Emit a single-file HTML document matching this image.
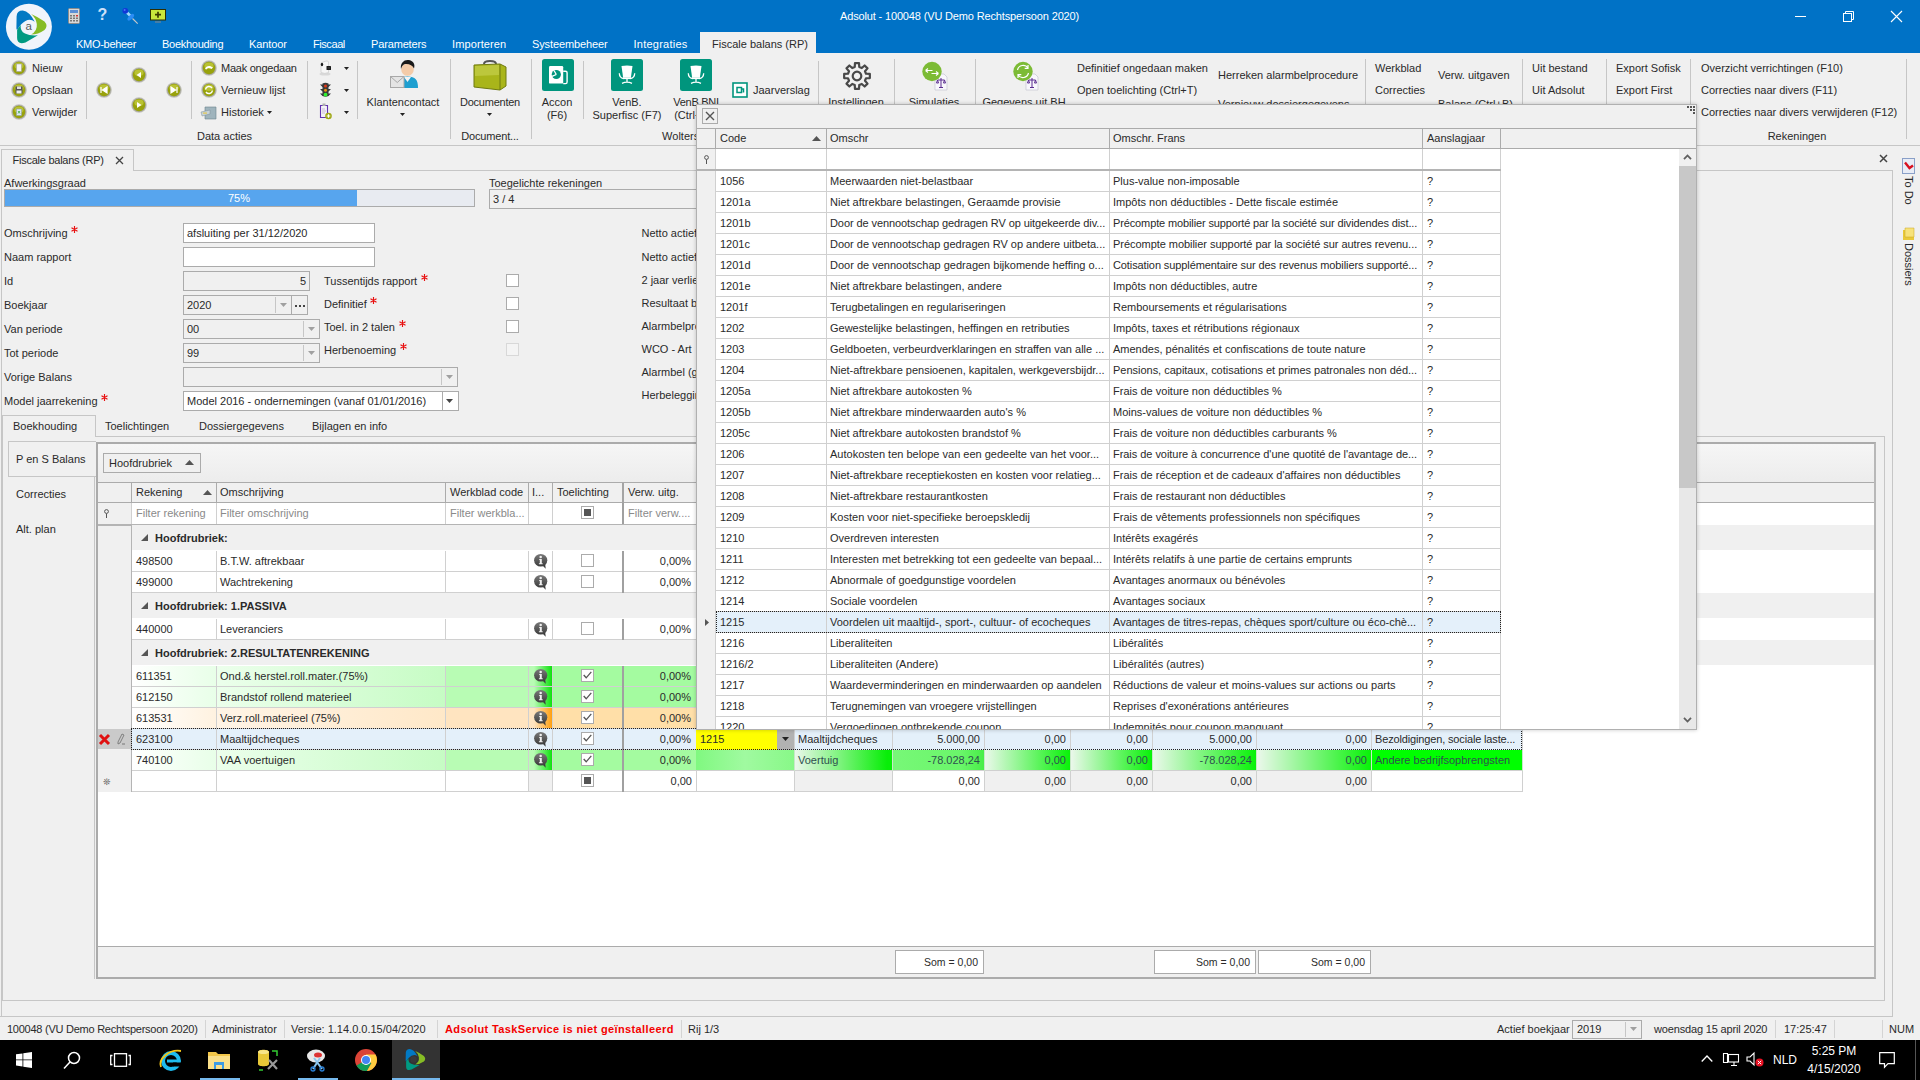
<!DOCTYPE html>
<html lang="nl"><head><meta charset="utf-8"><title>Adsolut - 100048 (VU Demo Rechtspersoon 2020)</title>
<style>
html,body{margin:0;padding:0;}
body{width:1920px;height:1080px;position:relative;overflow:hidden;background:#f0f0f0;font-family:"Liberation Sans",sans-serif;font-size:11px;color:#2a2a2a;}
div{position:absolute;box-sizing:border-box;}
.t{white-space:nowrap;line-height:14px;height:14px;}
.c{width:300px;text-align:center;}
.w{color:#fff;}
.b{font-weight:bold;}
.g{color:#8a8a8a;}
svg{position:absolute;overflow:visible;}
</style></head>
<body>
<div style="left:0px;top:0px;width:1920px;height:53px;background:#0072c6;"></div>
<svg style="left:0px;top:0px" width="56" height="54" viewBox="0 0 56 54"><circle cx="28.9" cy="26.850" r="23" fill="#f0f4fb"/><path d="M16.400 28.500L16.600 16.500Q16.800 10.600 22.800 10.600Q29.500 11.500 34.700 21.800Q28.500 16.800 21 24.500Q18.500 27.500 17 30Z" fill="#0279c3"/><path d="M31.100 14Q37 16.500 44.500 21.500Q48.500 25.900 44.500 30Q38 34.500 31.100 34.500Q37.500 31 36.800 24Q36 18 31.100 14Z" fill="#86bc25"/><path d="M20.700 24.900Q20 31 25 33.500Q30 36 37.900 35.300L25.500 42.500Q17.100 45 17.100 38L17.100 30Q18.500 27.500 20.700 24.900Z" fill="#009a82"/><text x="28.800" y="30.300" font-size="11.500" text-anchor="middle" fill="#5a5a5a" font-family="Liberation Sans">a</text></svg>
<svg style="left:68px;top:8px" width="12" height="16" viewBox="0 0 12 16"><rect x="0.5" y="0.5" width="11" height="15" rx="1" fill="#d8d8d8" stroke="#8c8c8c"/><rect x="2" y="2" width="8" height="3" fill="#5b8fd6"/><g fill="#777"><rect x="2" y="7" width="2" height="1.5"/><rect x="5" y="7" width="2" height="1.5"/><rect x="8" y="7" width="2" height="1.5" fill="#d33"/><rect x="2" y="9.5" width="2" height="1.5"/><rect x="5" y="9.5" width="2" height="1.5"/><rect x="8" y="9.5" width="2" height="1.5"/><rect x="2" y="12" width="2" height="1.5"/><rect x="5" y="12" width="2" height="1.5"/><rect x="8" y="12" width="2" height="1.5"/></g></svg>
<div class="t" style="left:97.5px;top:9px;font-size:16px;color:#cfe0f8;font-weight:bold;line-height:16px;top:7px;">?</div>
<svg style="left:120px;top:6px" width="20" height="20" viewBox="120 6 20 20"><path d="M132.500 18.500L137.700 23.700" stroke="#c8c8c8" stroke-width="1.100"/><path d="M126.500 12L131 16.500" stroke="#9fd8ff" stroke-width="2.600"/><ellipse cx="130.800" cy="17.200" rx="4.200" ry="2" transform="rotate(-45 130.800 17.200)" fill="#2a8cf5"/><circle cx="125.300" cy="10.800" r="2.900" fill="#1038d8"/><circle cx="124.600" cy="10" r="1" fill="#4a78f0"/></svg>
<svg style="left:150px;top:9px" width="17" height="15" viewBox="0 0 17 15"><rect x="0.5" y="0.5" width="15" height="10.5" fill="#c8e63c" stroke="#2e2e00"/><path d="M5 5.700h6M8 2.800v6" stroke="#3a3a00" stroke-width="1.700"/><rect x="5" y="12.5" width="6" height="1" fill="#888"/></svg>
<div class="t" style="left:840px;top:9px;color:#fff;letter-spacing:-0.15px;">Adsolut - 100048 (VU Demo Rechtspersoon 2020)</div>
<div style="left:1795px;top:16px;width:11px;height:1px;background:#fff;"></div>
<svg style="left:1843px;top:11px" width="11" height="11" viewBox="0 0 11 11" fill="none" stroke="#fff" stroke-width="1"><rect x="0.5" y="2.5" width="8" height="8"/><path d="M2.5 2.5V0.5H10.5V8.5H8.5"/></svg>
<svg style="left:1891px;top:11px" width="11" height="11" viewBox="0 0 11 11" stroke="#fff" stroke-width="1.1"><path d="M0 0L11 11M11 0L0 11"/></svg>
<div class="t" style="left:76px;top:37px;color:#fff;letter-spacing:-0.29px;">KMO-beheer</div>
<div class="t" style="left:162px;top:37px;color:#fff;letter-spacing:-0.27px;">Boekhouding</div>
<div class="t" style="left:249px;top:37px;color:#fff;letter-spacing:-0.1px;">Kantoor</div>
<div class="t" style="left:313px;top:37px;color:#fff;letter-spacing:-0.43px;">Fiscaal</div>
<div class="t" style="left:371px;top:37px;color:#fff;letter-spacing:-0.15px;">Parameters</div>
<div class="t" style="left:452px;top:37px;color:#fff;letter-spacing:0.11px;">Importeren</div>
<div class="t" style="left:532px;top:37px;color:#fff;letter-spacing:-0.12px;">Systeembeheer</div>
<div class="t" style="left:633.5px;top:37px;color:#fff;letter-spacing:0.24px;">Integraties</div>
<div style="left:700px;top:32px;width:116px;height:22px;background:#f0f0f0;"></div>
<div class="t" style="left:712px;top:37px;">Fiscale balans (RP)</div>
<div style="left:0px;top:53px;width:1920px;height:92px;background:#f0f0f0;"></div>
<div style="left:0px;top:145px;width:1920px;height:1px;background:#c6c6c6;"></div>
<svg style="left:11px;top:60px" width="16" height="16" viewBox="-.5 -.5 16 16"><circle cx="7.500" cy="7.500" r="7.800" fill="#c2c2ba"/><circle cx="7.500" cy="7.500" r="7" fill="#a8a89c"/><circle cx="7.500" cy="7.500" r="6.200" fill="#98a20c"/><ellipse cx="7.500" cy="5.300" rx="4.600" ry="3.200" fill="#c4cc40" opacity=".75"/><rect x="5" y="3.5" width="5" height="7.5" fill="#f4f4f4" stroke="#999" stroke-width=".5"/></svg>
<div class="t" style="left:32px;top:61px;">Nieuw</div>
<svg style="left:11px;top:82px" width="16" height="16" viewBox="-.5 -.5 16 16"><circle cx="7.500" cy="7.500" r="7.800" fill="#c2c2ba"/><circle cx="7.500" cy="7.500" r="7" fill="#a8a89c"/><circle cx="7.500" cy="7.500" r="6.200" fill="#98a20c"/><ellipse cx="7.500" cy="5.300" rx="4.600" ry="3.200" fill="#c4cc40" opacity=".75"/><rect x="4" y="4" width="7" height="7" fill="#555"/><rect x="5.5" y="4" width="4" height="2.5" fill="#ddd"/><rect x="5" y="8" width="5" height="3" fill="#eee"/></svg>
<div class="t" style="left:32px;top:83px;">Opslaan</div>
<svg style="left:11px;top:104px" width="16" height="16" viewBox="-.5 -.5 16 16"><circle cx="7.500" cy="7.500" r="7.800" fill="#c2c2ba"/><circle cx="7.500" cy="7.500" r="7" fill="#a8a89c"/><circle cx="7.500" cy="7.500" r="6.200" fill="#98a20c"/><ellipse cx="7.500" cy="5.300" rx="4.600" ry="3.200" fill="#c4cc40" opacity=".75"/><rect x="5" y="4.5" width="5" height="6.5" fill="#dfe9f5" stroke="#89a" stroke-width=".5"/><path d="M6.5 6.5l2 2.5m0-2.5l-2 2.5" stroke="#3a3" stroke-width=".8"/></svg>
<div class="t" style="left:32px;top:105px;">Verwijder</div>
<div style="left:86px;top:61px;width:1px;height:58px;background:#c6c6c6;"></div>
<svg style="left:96px;top:82px" width="16" height="16" viewBox="-.5 -.5 16 16"><circle cx="7.500" cy="7.500" r="7.800" fill="#c2c2ba"/><circle cx="7.500" cy="7.500" r="7" fill="#a8a89c"/><circle cx="7.500" cy="7.500" r="6.200" fill="#98a20c"/><ellipse cx="7.500" cy="5.300" rx="4.600" ry="3.200" fill="#c4cc40" opacity=".75"/><path d="M4.5 4.5v6M10.5 4.5L6 7.5l4.5 3z" fill="#fff" stroke="#fff" stroke-width="1.2"/></svg>
<svg style="left:131px;top:67px" width="16" height="16" viewBox="-.5 -.5 16 16"><circle cx="7.500" cy="7.500" r="7.800" fill="#c2c2ba"/><circle cx="7.500" cy="7.500" r="7" fill="#a8a89c"/><circle cx="7.500" cy="7.500" r="6.200" fill="#98a20c"/><ellipse cx="7.500" cy="5.300" rx="4.600" ry="3.200" fill="#c4cc40" opacity=".75"/><path d="M9.5 4.5L5 7.5l4.5 3z" fill="#fff"/></svg>
<svg style="left:131px;top:97px" width="16" height="16" viewBox="-.5 -.5 16 16"><circle cx="7.500" cy="7.500" r="7.800" fill="#c2c2ba"/><circle cx="7.500" cy="7.500" r="7" fill="#a8a89c"/><circle cx="7.500" cy="7.500" r="6.200" fill="#98a20c"/><ellipse cx="7.500" cy="5.300" rx="4.600" ry="3.200" fill="#c4cc40" opacity=".75"/><path d="M5.5 4.5L10 7.5l-4.5 3z" fill="#fff"/></svg>
<svg style="left:166px;top:82px" width="16" height="16" viewBox="-.5 -.5 16 16"><circle cx="7.500" cy="7.500" r="7.800" fill="#c2c2ba"/><circle cx="7.500" cy="7.500" r="7" fill="#a8a89c"/><circle cx="7.500" cy="7.500" r="6.200" fill="#98a20c"/><ellipse cx="7.500" cy="5.300" rx="4.600" ry="3.200" fill="#c4cc40" opacity=".75"/><path d="M10.5 4.5v6M4.5 4.5L9 7.5l-4.5 3z" fill="#fff" stroke="#fff" stroke-width="1.2"/></svg>
<div style="left:191px;top:61px;width:1px;height:58px;background:#c6c6c6;"></div>
<svg style="left:201px;top:60px" width="16" height="16" viewBox="-.5 -.5 16 16"><circle cx="7.500" cy="7.500" r="7.800" fill="#c2c2ba"/><circle cx="7.500" cy="7.500" r="7" fill="#a8a89c"/><circle cx="7.500" cy="7.500" r="6.200" fill="#98a20c"/><ellipse cx="7.500" cy="5.300" rx="4.600" ry="3.200" fill="#c4cc40" opacity=".75"/><path d="M3.5 8.5c1-3.5 5-4 8-1.5l-1.5 1.5c-2-1.5-4-1.5-5 .5z" fill="#fff"/></svg>
<div class="t" style="left:221px;top:61px;letter-spacing:-0.25px;">Maak ongedaan</div>
<svg style="left:201px;top:82px" width="16" height="16" viewBox="-.5 -.5 16 16"><circle cx="7.500" cy="7.500" r="7.800" fill="#c2c2ba"/><circle cx="7.500" cy="7.500" r="7" fill="#a8a89c"/><circle cx="7.500" cy="7.500" r="6.200" fill="#98a20c"/><ellipse cx="7.500" cy="5.300" rx="4.600" ry="3.200" fill="#c4cc40" opacity=".75"/><path d="M4 7a3.6 3.6 0 0 1 6.5-1.5M11 8a3.6 3.6 0 0 1-6.5 1.5" fill="none" stroke="#fff" stroke-width="1.5"/></svg>
<div class="t" style="left:221px;top:83px;">Vernieuw lijst</div>
<svg style="left:201px;top:105px" width="17" height="15" viewBox="0 0 17 15"><path d="M4 2h11v12H4z" fill="#9fb4bd" stroke="#6d848e" stroke-width=".6"/><path d="M0 7l9-2v4l-8 2z" fill="#c7d3d8" stroke="#7c8f97" stroke-width=".5"/><rect x="2" y="7.5" width="4" height="1.2" fill="#e6c84f"/></svg>
<div class="t" style="left:221px;top:105px;">Historiek</div>
<svg style="left:267px;top:111px" width="5" height="3" viewBox="0 0 5 3"><path d="M0 0h5L2.5 3z" fill="#222"/></svg>
<div style="left:307px;top:61px;width:1px;height:58px;background:#c6c6c6;"></div>
<svg style="left:319px;top:60px" width="14" height="16" viewBox="0 0 14 16"><ellipse cx="6" cy="14" rx="5.500" ry="1.500" fill="#d8d8d8"/><path d="M2 3.500q0-1 1-1l4-1.500q2-.5 2.500 1v10.500q-3.500 1.800-7.500 0z" fill="#f6f6f6" stroke="#c4c4c4" stroke-width=".6"/><ellipse cx="3" cy="4.500" rx="1.200" ry="1.800" fill="#1a1a1a"/><rect x="7.500" y="6" width="4.500" height="4" rx=".5" fill="#1c1c1c"/><rect x="8.700" y="7" width="2.300" height="1.800" fill="#333"/></svg>
<svg style="left:320px;top:82px" width="11" height="16" viewBox="0 0 11 16"><path d="M2.500 1.500q3-1.500 6 0v12.500q-3 1.500-6 0z" fill="#3a3a3a"/><path d="M0 2.500h11l-2.500 2.500h-6zM0 7h11l-2.500 2.500h-6zM0 11.500h11l-2.500 2.500h-6z" fill="#3a3a3a"/><circle cx="5.500" cy="4" r="1.500" fill="#e03818"/><circle cx="5.500" cy="8.300" r="1.500" fill="#e89010"/><circle cx="5.500" cy="12.700" r="1.900" fill="#30f030"/></svg>
<svg style="left:319px;top:103px" width="14" height="17" viewBox="0 0 14 17"><path d="M1.500 2.500h7v12h-7z" fill="#f4f2f8" stroke="#6232b0" stroke-width="1.100"/><rect x="3.500" y=".5" width="3" height="2.500" fill="#b0b0b0"/><path d="M3 6h3M3 8h4M3 10h3" stroke="#b8a8c8" stroke-width=".7"/><circle cx="9.500" cy="13" r="3.300" fill="#a0a818"/><path d="M7.700 13h3.600M9.500 11.200v3.600" stroke="#fff" stroke-width="1.200"/></svg>
<svg style="left:344px;top:67px" width="5" height="3" viewBox="0 0 5 3"><path d="M0 0h5L2.5 3z" fill="#222"/></svg>
<svg style="left:344px;top:89px" width="5" height="3" viewBox="0 0 5 3"><path d="M0 0h5L2.5 3z" fill="#222"/></svg>
<svg style="left:344px;top:111px" width="5" height="3" viewBox="0 0 5 3"><path d="M0 0h5L2.5 3z" fill="#222"/></svg>
<div style="left:357px;top:61px;width:1px;height:58px;background:#c6c6c6;"></div>
<svg style="left:388px;top:58px" width="32" height="32" viewBox="388 58 32 32"><path d="M396.500 88c0-8 3-11.500 11-11.500s10.500 3.500 10.500 11.500z" fill="#1e9fd0"/><path d="M404 77l3.500 5 3.500-5z" fill="#f4f4f4"/><circle cx="407.500" cy="69.500" r="6.300" fill="#f4cba8"/><path d="M401 69c-1-6 3-9.500 7.500-9s7 4 5.500 8.500c-1.500-3-4-4.500-7.500-4.500s-4.500 2-5.500 5z" fill="#1a1a1a"/><rect x="390.500" y="76.500" width="13.500" height="11" fill="#e4e4e4" stroke="#a8a8a8"/><path d="M390.500 76.500l6.750 6 6.750-6" fill="none" stroke="#a8a8a8"/></svg>
<div class="t c" style="left:253px;top:95px;">Klantencontact</div>
<svg style="left:400px;top:113px" width="5" height="3" viewBox="0 0 5 3"><path d="M0 0h5L2.5 3z" fill="#222"/></svg>
<div style="left:450px;top:59px;width:1px;height:80px;background:#c6c6c6;"></div>
<svg style="left:472px;top:58px" width="36" height="34" viewBox="0 0 36 34"><path d="M12 6c0-4 12-4 12 0" fill="none" stroke="#555" stroke-width="2"/><path d="M2 7l26-1 6 3v19l-6 4-26-3z" fill="#a9b51a" stroke="#6f7a10"/><path d="M28 6v26" stroke="#6f7a10"/><path d="M3 8l24-1v10l-24 1z" fill="#c5cf4c" opacity=".7"/></svg>
<div class="t c" style="left:340px;top:95px;letter-spacing:-0.24px;">Documenten</div>
<svg style="left:487px;top:113px" width="5" height="3" viewBox="0 0 5 3"><path d="M0 0h5L2.5 3z" fill="#222"/></svg>
<div class="t" style="left:42px;top:129px;left:197px;">Data acties</div>
<div class="t c" style="left:340px;top:129px;letter-spacing:-0.17px;">Document...</div>
<div style="left:531px;top:59px;width:1px;height:80px;background:#c6c6c6;"></div>
<svg style="left:542px;top:59px" width="32" height="32" viewBox="0 0 32 32"><rect width="32" height="32" rx="2.500" fill="#00957d"/><rect x="7" y="7" width="14.200" height="17.600" rx="1.200" fill="#fff"/><path d="M21.200 12.200h2.300q1.600 0 1.600 1.600v9.200q0 1.600-1.600 1.600h-2.300" fill="none" stroke="#fff" stroke-width="1.400"/><circle cx="14.300" cy="15.500" r="4.600" fill="#00957d"/><path d="M14.300 15.500l-2.300-4M14.300 15.500l-4.300 1.800" stroke="#fff" stroke-width="1.300"/></svg>
<div class="t c" style="left:407px;top:95px;">Accon</div>
<div class="t c" style="left:407px;top:108px;">(F6)</div>
<div style="left:583px;top:61px;width:1px;height:58px;background:#c6c6c6;"></div>
<svg style="left:611px;top:59px" width="32" height="32" viewBox="0 0 32 32"><rect width="32" height="32" rx="2.500" fill="#00957d"/><path d="M10.500 7q5.500-1.200 11 0l-1.600 11.500h-7.800z" fill="#fff"/><path d="M8.300 14.300q.2 4.700 4.200 5.200M23.700 14.300q-.2 4.700-4.200 5.200M16 20v3.300M11 24.300q5-2.200 10 0" fill="none" stroke="#fff" stroke-width="1.300"/><rect x="12" y="18.300" width="8" height="1.800" fill="#fff"/></svg>
<div class="t c" style="left:477px;top:95px;">VenB.</div>
<div class="t c" style="left:477px;top:108px;">Superfisc (F7)</div>
<svg style="left:680px;top:59px" width="32" height="32" viewBox="0 0 32 32"><rect width="32" height="32" rx="2.500" fill="#00957d"/><path d="M10.500 7q5.500-1.200 11 0l-1.600 11.500h-7.800z" fill="#fff"/><path d="M8.300 14.300q.2 4.700 4.200 5.200M23.700 14.300q-.2 4.700-4.200 5.200M16 20v3.300M11 24.300q5-2.200 10 0" fill="none" stroke="#fff" stroke-width="1.300"/><rect x="12" y="18.300" width="8" height="1.800" fill="#fff"/></svg>
<div class="t c" style="left:546px;top:95px;letter-spacing:-0.3px;">VenB BNI</div>
<div class="t c" style="left:546px;top:108px;">(Ctrl+F7)</div>
<svg style="left:732px;top:82px" width="16" height="16" viewBox="0 0 16 16"><rect x="1" y="1" width="14" height="14" fill="#fff" stroke="#00957d" stroke-width="1.6"/><path d="M5 5.500h4.500v5H5zM9.500 7h2v3.500" fill="none" stroke="#00957d" stroke-width="1.500"/></svg>
<div class="t" style="left:753px;top:83px;">Jaarverslag</div>
<div class="t c" style="left:549px;top:129px;">Wolters Kluwer</div>
<div style="left:818px;top:61px;width:1px;height:58px;background:#c6c6c6;"></div>
<svg style="left:841.500px;top:60.500px" width="30" height="30" viewBox="-15 -15 30 30"><g fill="none" stroke="#484848" stroke-width="2.200" stroke-linejoin="round"><circle r="4.300"/><path d="M-2.25 -9.02L-2.03 -12.84L2.03 -12.84L2.25 -9.02L4.79 -7.97L7.64 -10.52L10.52 -7.64L7.97 -4.79L9.02 -2.25L12.84 -2.03L12.84 2.03L9.02 2.25L7.97 4.79L10.52 7.64L7.64 10.52L4.79 7.97L2.25 9.02L2.03 12.84L-2.03 12.84L-2.25 9.02L-4.79 7.97L-7.64 10.52L-10.52 7.64L-7.97 4.79L-9.02 2.25L-12.84 2.03L-12.84 -2.03L-9.02 -2.25L-7.97 -4.79L-10.52 -7.64L-7.64 -10.52L-4.79 -7.97Z"/></g></svg>
<div class="t c" style="left:706px;top:95px;">Instellingen</div>
<div style="left:894px;top:59px;width:1px;height:60px;background:#c6c6c6;"></div>
<svg style="left:922px;top:61px" width="28" height="30" viewBox="0 0 28 30"><path d="M13 13h9l3 3v13H13z" fill="#f8f7fc" stroke="#c4c4d0" stroke-width=".7"/><path d="M19 17v9M15.5 19h7M15.5 19l-1 3h2zM22.500 19l-1 3h2zM17 26.500h4" stroke="#5b2d90" stroke-width="1" fill="none"/><circle cx="10" cy="10.500" r="9.700" fill="#7cbb35"/><path d="M3.500 9.500h7m-7 0l2.500-2m-2.500 2l2.500 2M9.500 12.500h7m0 0l-2.500-2m2.500 2l-2.500 2" stroke="#fff" stroke-width="1.1" fill="none"/></svg>
<div class="t c" style="left:784px;top:95px;">Simulaties</div>
<div style="left:975px;top:59px;width:1px;height:60px;background:#c6c6c6;"></div>
<svg style="left:1013px;top:61px" width="28" height="30" viewBox="0 0 28 30"><path d="M13 13h9l3 3v13H13z" fill="#f8f7fc" stroke="#c4c4d0" stroke-width=".7"/><path d="M19 17v9M15.5 19h7M15.5 19l-1 3h2zM22.500 19l-1 3h2zM17 26.500h4" stroke="#5b2d90" stroke-width="1" fill="none"/><circle cx="10" cy="10.500" r="9.700" fill="#7cbb35"/><path d="M4.500 9a5.800 5.800 0 0 1 10.500-2M15.500 12a5.800 5.800 0 0 1-10.500 2M15 4v3.300h-3.300M5 17v-3.300h3.300" stroke="#fff" stroke-width="1.2" fill="none"/></svg>
<div class="t c" style="left:874px;top:95px;">Gegevens uit BH</div>
<div class="t" style="left:1077px;top:61px;">Definitief ongedaan maken</div>
<div class="t" style="left:1077px;top:83px;">Open toelichting (Ctrl+T)</div>
<div class="t" style="left:1218px;top:68px;">Herreken alarmbelprocedure</div>
<div class="t" style="left:1218px;top:97px;">Vernieuw dossiergegevens</div>
<div style="left:1365px;top:59px;width:1px;height:80px;background:#c6c6c6;"></div>
<div class="t" style="left:1375px;top:61px;">Werkblad</div>
<div class="t" style="left:1375px;top:83px;">Correcties</div>
<div class="t" style="left:1438px;top:68px;">Verw. uitgaven</div>
<div class="t" style="left:1438px;top:97px;">Balans (Ctrl+B)</div>
<div style="left:1522px;top:59px;width:1px;height:80px;background:#c6c6c6;"></div>
<div class="t" style="left:1532px;top:61px;">Uit bestand</div>
<div class="t" style="left:1532px;top:83px;">Uit Adsolut</div>
<div style="left:1606px;top:59px;width:1px;height:80px;background:#c6c6c6;"></div>
<div class="t" style="left:1616px;top:61px;">Export Sofisk</div>
<div class="t" style="left:1616px;top:83px;">Export First</div>
<div style="left:1690px;top:59px;width:1px;height:80px;background:#c6c6c6;"></div>
<div class="t" style="left:1701px;top:61px;">Overzicht verrichtingen (F10)</div>
<div class="t" style="left:1701px;top:83px;">Correcties naar divers (F11)</div>
<div class="t" style="left:1701px;top:105px;">Correcties naar divers verwijderen (F12)</div>
<div class="t c" style="left:1647px;top:129px;">Rekeningen</div>
<div style="left:1906px;top:59px;width:1px;height:80px;background:#c6c6c6;"></div>
<div style="left:1px;top:170px;width:1892px;height:1px;background:#c6c6c6;"></div>
<div style="left:1px;top:149px;width:133px;height:22px;background:#f0f0f0;border:1px solid #c6c6c6;border-bottom:none;"></div>
<div style="left:1px;top:170px;width:1px;height:847px;background:#c6c6c6;"></div>
<div class="t" style="left:12.5px;top:153px;letter-spacing:-0.25px;">Fiscale balans (RP)</div>
<svg style="left:116px;top:157px" width="7" height="7" viewBox="0 0 7 7" stroke="#444" stroke-width="1.3"><path d="M0 0L7 7M7 0L0 7"/></svg>
<svg style="left:1880px;top:155px" width="7" height="7" viewBox="0 0 7 7" stroke="#444" stroke-width="1.5"><path d="M0 0L7 7M7 0L0 7"/></svg>
<div style="left:1892px;top:170px;width:1px;height:847px;background:#c6c6c6;"></div>
<svg style="left:1902px;top:158px" width="13" height="16" viewBox="0 0 13 16"><rect x=".5" y=".5" width="12" height="15" fill="#e8ecf6" stroke="#8aa0c8"/><path d="M3 4.500l4.500 5.500 3.500-2.500" fill="none" stroke="#d81020" stroke-width="2.400"/></svg>
<div class="t" style="left:1902px;top:176px;writing-mode:vertical-rl;height:auto;width:14px;line-height:14px;">To Do</div>
<svg style="left:1902px;top:227px" width="13" height="14" viewBox="0 0 13 14"><path d="M1 3h11v10H1z" fill="#e9c93a"/><path d="M3 1h9v9H3z" fill="#f7e27a" stroke="#c9a520" stroke-width=".5"/></svg>
<div class="t" style="left:1902px;top:243px;writing-mode:vertical-rl;height:auto;width:14px;line-height:14px;">Dossiers</div>
<div class="t" style="left:4px;top:176px;">Afwerkingsgraad</div>
<div style="left:4px;top:189px;width:471px;height:18px;background:#e8ebf1;border:1px solid #ababab;"></div>
<div style="left:5px;top:190px;width:352px;height:16px;background:#57a5ee;"></div>
<div class="t c" style="left:89px;top:191px;color:#fff;">75%</div>
<div class="t" style="left:489px;top:176px;">Toegelichte rekeningen</div>
<div style="left:489px;top:189px;width:400px;height:20px;background:#f0f0f0;border:1px solid #ababab;"></div>
<div class="t" style="left:493px;top:192px;">3 / 4</div>
<div class="t" style="left:4px;top:226px;">Omschrijving</div>
<svg style="left:71.1px;top:226px" width="7" height="7" viewBox="-3.500 -3.500 7 7" stroke="#e81010" stroke-width="1.150"><path d="M0-3.400V3.400M-3-1.700L3 1.700M-3 1.700L3-1.700"/></svg>
<div class="t" style="left:4px;top:250px;">Naam rapport</div>
<div class="t" style="left:4px;top:274px;">Id</div>
<div class="t" style="left:4px;top:298px;">Boekjaar</div>
<div class="t" style="left:4px;top:322px;">Van periode</div>
<div class="t" style="left:4px;top:346px;">Tot periode</div>
<div class="t" style="left:4px;top:370px;">Vorige Balans</div>
<div class="t" style="left:4px;top:394px;">Model jaarrekening</div>
<svg style="left:101.1px;top:394px" width="7" height="7" viewBox="-3.500 -3.500 7 7" stroke="#e81010" stroke-width="1.150"><path d="M0-3.400V3.400M-3-1.700L3 1.700M-3 1.700L3-1.700"/></svg>
<div style="left:183px;top:223px;width:192px;height:20px;background:#fff;border:1px solid #ababab;"></div>
<div class="t" style="left:187px;top:226px;">afsluiting per 31/12/2020</div>
<div style="left:183px;top:247px;width:192px;height:20px;background:#fff;border:1px solid #ababab;"></div>
<div style="left:183px;top:271px;width:127px;height:20px;background:#f0f0f0;border:1px solid #ababab;"></div>
<div class="t" style="right:1614px;top:274px;">5</div>
<div style="left:183px;top:295px;width:109px;height:20px;background:#f0f0f0;border:1px solid #ababab;"></div>
<div class="t" style="left:187px;top:298px;">2020</div>
<div style="left:275px;top:297px;width:1px;height:16px;background:#c6c6c6;"></div>
<svg style="left:280px;top:303px" width="7" height="4" viewBox="0 0 7 4"><path d="M0 0h7L3.500 4z" fill="#a0a0a0"/></svg>
<div style="left:291px;top:295px;width:17px;height:20px;background:#f0f0f0;border:1px solid #ababab;"></div>
<div style="left:295px;top:305px;width:2px;height:2px;background:#444;"></div>
<div style="left:299px;top:305px;width:2px;height:2px;background:#444;"></div>
<div style="left:303px;top:305px;width:2px;height:2px;background:#444;"></div>
<div style="left:183px;top:319px;width:137px;height:20px;background:#f0f0f0;border:1px solid #ababab;"></div>
<div class="t" style="left:187px;top:322px;">00</div>
<div style="left:303px;top:321px;width:1px;height:16px;background:#c6c6c6;"></div>
<svg style="left:308px;top:327px" width="7" height="4" viewBox="0 0 7 4"><path d="M0 0h7L3.500 4z" fill="#a0a0a0"/></svg>
<div style="left:183px;top:343px;width:137px;height:20px;background:#f0f0f0;border:1px solid #ababab;"></div>
<div class="t" style="left:187px;top:346px;">99</div>
<div style="left:303px;top:345px;width:1px;height:16px;background:#c6c6c6;"></div>
<svg style="left:308px;top:351px" width="7" height="4" viewBox="0 0 7 4"><path d="M0 0h7L3.500 4z" fill="#a0a0a0"/></svg>
<div style="left:183px;top:367px;width:275px;height:20px;background:#f0f0f0;border:1px solid #ababab;"></div>
<div style="left:441px;top:369px;width:1px;height:16px;background:#c6c6c6;"></div>
<svg style="left:446px;top:375px" width="7" height="4" viewBox="0 0 7 4"><path d="M0 0h7L3.500 4z" fill="#a0a0a0"/></svg>
<div style="left:183px;top:391px;width:276px;height:20px;background:#fff;border:1px solid #ababab;"></div>
<div class="t" style="left:187px;top:394px;">Model 2016 - ondernemingen (vanaf 01/01/2016)</div>
<div style="left:442px;top:392px;width:1px;height:18px;background:#ababab;"></div>
<svg style="left:446px;top:399px" width="7" height="4" viewBox="0 0 7 4"><path d="M0 0h7L3.500 4z" fill="#444"/></svg>
<div class="t" style="left:324px;top:274px;">Tussentijds rapport</div>
<svg style="left:420.7px;top:274px" width="7" height="7" viewBox="-3.500 -3.500 7 7" stroke="#e81010" stroke-width="1.150"><path d="M0-3.400V3.400M-3-1.700L3 1.700M-3 1.700L3-1.700"/></svg>
<div style="left:506px;top:274px;width:13px;height:13px;background:#fff;border:1px solid #ababab;"></div>
<div class="t" style="left:324px;top:297px;">Definitief</div>
<svg style="left:370.3px;top:297px" width="7" height="7" viewBox="-3.500 -3.500 7 7" stroke="#e81010" stroke-width="1.150"><path d="M0-3.400V3.400M-3-1.700L3 1.700M-3 1.700L3-1.700"/></svg>
<div style="left:506px;top:297px;width:13px;height:13px;background:#fff;border:1px solid #ababab;"></div>
<div class="t" style="left:324px;top:320px;">Toel. in 2 talen</div>
<svg style="left:398.5px;top:320px" width="7" height="7" viewBox="-3.500 -3.500 7 7" stroke="#e81010" stroke-width="1.150"><path d="M0-3.400V3.400M-3-1.700L3 1.700M-3 1.700L3-1.700"/></svg>
<div style="left:506px;top:320px;width:13px;height:13px;background:#fff;border:1px solid #ababab;"></div>
<div class="t" style="left:324px;top:343px;">Herbenoeming</div>
<svg style="left:399.7px;top:343px" width="7" height="7" viewBox="-3.500 -3.500 7 7" stroke="#e81010" stroke-width="1.150"><path d="M0-3.400V3.400M-3-1.700L3 1.700M-3 1.700L3-1.700"/></svg>
<div style="left:506px;top:343px;width:13px;height:13px;background:#f4f4f4;border:1px solid #d8d8d8;"></div>
<div class="t" style="left:641.5px;top:226px;">Netto actief</div>
<div class="t" style="left:641.5px;top:250px;">Netto actief</div>
<div class="t" style="left:641.5px;top:273px;">2 jaar verlies</div>
<div class="t" style="left:641.5px;top:296px;">Resultaat bo</div>
<div class="t" style="left:641.5px;top:319px;">Alarmbelproc</div>
<div class="t" style="left:641.5px;top:342px;">WCO - Art</div>
<div class="t" style="left:641.5px;top:365px;">Alarmbel (g</div>
<div class="t" style="left:641.5px;top:388px;">Herbeleggin</div>
<div style="left:2px;top:436px;width:1883px;height:1px;background:#c6c6c6;"></div>
<div style="left:2px;top:436px;width:1px;height:565px;background:#c6c6c6;"></div>
<div style="left:1884px;top:436px;width:1px;height:565px;background:#c6c6c6;"></div>
<div style="left:2px;top:1000px;width:1883px;height:1px;background:#c6c6c6;"></div>
<div style="left:0px;top:1016px;width:1893px;height:1px;background:#c6c6c6;"></div>
<div style="left:2px;top:415px;width:94px;height:22px;background:#f0f0f0;border:1px solid #c6c6c6;border-bottom:none;"></div>
<div class="t" style="left:13px;top:419px;">Boekhouding</div>
<div class="t" style="left:105px;top:419px;">Toelichtingen</div>
<div class="t" style="left:199px;top:419px;">Dossiergegevens</div>
<div class="t" style="left:312px;top:419px;">Bijlagen en info</div>
<div style="left:94px;top:441px;width:1px;height:538px;background:#c6c6c6;"></div>
<div style="left:8px;top:441px;width:88px;height:36px;background:#f0f0f0;border:1px solid #c6c6c6;border-right:none;"></div>
<div class="t" style="left:16px;top:452px;">P en S Balans</div>
<div class="t" style="left:16px;top:487px;">Correcties</div>
<div class="t" style="left:16px;top:522px;">Alt. plan</div>
<div style="left:96px;top:442px;width:1780px;height:537px;background:#fff;border:2px solid #ababab;border-right:2px solid #b8b8b8;"></div>
<div style="left:98px;top:444px;width:1776px;height:39px;background:linear-gradient(#f6f6f6,#ececec);"></div>
<div style="left:103px;top:453px;width:98px;height:20px;background:#f0f0f0;border:1px solid #ababab;"></div>
<div class="t" style="left:109px;top:456px;">Hoofdrubriek</div>
<svg style="left:185px;top:460px" width="9" height="5" viewBox="0 0 9 5"><path d="M0 5h9L4.500 0z" fill="#555"/></svg>
<div style="left:98px;top:483px;width:1776px;height:20px;background:#f0f0f0;"></div>
<div style="left:98px;top:482px;width:1776px;height:1px;background:#ababab;"></div>
<div style="left:98px;top:502px;width:1776px;height:1px;background:#ababab;"></div>
<div style="left:131px;top:483px;width:1px;height:19px;background:#ababab;"></div>
<div style="left:216px;top:483px;width:1px;height:19px;background:#ababab;"></div>
<div style="left:445px;top:483px;width:1px;height:19px;background:#ababab;"></div>
<div style="left:528px;top:483px;width:1px;height:19px;background:#ababab;"></div>
<div style="left:552px;top:483px;width:1px;height:19px;background:#ababab;"></div>
<div style="left:622px;top:483px;width:1px;height:19px;background:#ababab;"></div>
<div style="left:696px;top:483px;width:1px;height:19px;background:#ababab;"></div>
<div class="t" style="left:136px;top:485px;">Rekening</div>
<svg style="left:203px;top:490px" width="9" height="5" viewBox="0 0 9 5"><path d="M0 5h9L4.500 0z" fill="#555"/></svg>
<div class="t" style="left:220px;top:485px;">Omschrijving</div>
<div class="t" style="left:450px;top:485px;">Werkblad code</div>
<div class="t" style="left:532px;top:485px;">I...</div>
<div class="t" style="left:557px;top:485px;">Toelichting</div>
<div class="t" style="left:628px;top:485px;">Verw. uitg.</div>
<div style="left:98px;top:503px;width:33px;height:21px;background:#f0f0f0;"></div>
<div style="left:98px;top:524px;width:598px;height:2px;background:#b4b4b4;"></div>
<div style="left:131px;top:503px;width:1px;height:21px;background:#d0d0d0;"></div>
<div style="left:216px;top:503px;width:1px;height:21px;background:#d0d0d0;"></div>
<div style="left:445px;top:503px;width:1px;height:21px;background:#d0d0d0;"></div>
<div style="left:528px;top:503px;width:1px;height:21px;background:#d0d0d0;"></div>
<div style="left:552px;top:503px;width:1px;height:21px;background:#d0d0d0;"></div>
<div style="left:622px;top:503px;width:1px;height:21px;background:#d0d0d0;"></div>
<div style="left:696px;top:503px;width:1px;height:21px;background:#d0d0d0;"></div>
<div style="left:622px;top:503px;width:2px;height:21px;background:#a0a0a0;"></div>
<div style="left:622px;top:483px;width:2px;height:20px;background:#a4a4a4;"></div>
<svg style="left:104px;top:509px" width="5" height="9" viewBox="0 0 5 9"><circle cx="2.500" cy="2.500" r="1.900" fill="none" stroke="#555" stroke-width="1"/><path d="M2.500 4.500v4.500" stroke="#555"/></svg>
<div class="t g" style="left:136px;top:506px;">Filter rekening</div>
<div class="t g" style="left:220px;top:506px;">Filter omschrijving</div>
<div class="t g" style="left:450px;top:506px;">Filter werkbla...</div>
<div class="t g" style="left:628px;top:506px;">Filter verw....</div>
<div style="left:581px;top:506px;width:13px;height:13px;background:#fff;border:1px solid #ababab;"></div>
<div style="left:584px;top:509px;width:7px;height:7px;background:#555;"></div>
<div style="left:98px;top:526px;width:33px;height:266px;background:#f0f0f0;"></div>
<div style="left:131px;top:525px;width:1743px;height:25px;background:#f0f0f0;"></div>
<svg style="left:141px;top:534px" width="7" height="7" viewBox="0 0 7 7"><path d="M0 7h7V0z" fill="#555"/></svg>
<div class="t b" style="left:155px;top:531px;">Hoofdrubriek:</div>
<div style="left:131px;top:571px;width:565px;height:1px;background:#d0d0d0;"></div>
<div style="left:216px;top:551px;width:1px;height:21px;background:#d0d0d0;"></div>
<div style="left:445px;top:551px;width:1px;height:21px;background:#d0d0d0;"></div>
<div style="left:528px;top:551px;width:1px;height:21px;background:#d0d0d0;"></div>
<div style="left:552px;top:551px;width:1px;height:21px;background:#d0d0d0;"></div>
<div style="left:622px;top:551px;width:2px;height:21px;background:#a0a0a0;"></div>
<div class="t" style="left:136px;top:554px;">498500</div>
<div class="t" style="left:220px;top:554px;">B.T.W. aftrekbaar</div>
<svg style="left:533px;top:553px" width="16" height="17" viewBox="0 0 16 17"><defs><linearGradient id="ig553" x1="0" y1="0" x2="0" y2="1"><stop offset="0" stop-color="#7a7a7a"/><stop offset="1" stop-color="#3c3c3c"/></linearGradient></defs><path d="M9.500 12.500l3.200 3.200-.5-4.500z" fill="#3c3c3c"/><ellipse cx="7.700" cy="7.200" rx="6.600" ry="6.300" fill="url(#ig553)"/><circle cx="7.700" cy="3.900" r="1.250" fill="#f0f0f0"/><path d="M6.200 6h2.600v4.300h.9v1H5.900v-1h.9V7h-.6z" fill="#f0f0f0"/></svg>
<div style="left:581px;top:554px;width:13px;height:13px;background:#fff;border:1px solid #ababab;"></div>
<div class="t" style="right:1229px;top:554px;">0,00%</div>
<div style="left:131px;top:592px;width:565px;height:1px;background:#d0d0d0;"></div>
<div style="left:216px;top:572px;width:1px;height:21px;background:#d0d0d0;"></div>
<div style="left:445px;top:572px;width:1px;height:21px;background:#d0d0d0;"></div>
<div style="left:528px;top:572px;width:1px;height:21px;background:#d0d0d0;"></div>
<div style="left:552px;top:572px;width:1px;height:21px;background:#d0d0d0;"></div>
<div style="left:622px;top:572px;width:2px;height:21px;background:#a0a0a0;"></div>
<div class="t" style="left:136px;top:575px;">499000</div>
<div class="t" style="left:220px;top:575px;">Wachtrekening</div>
<svg style="left:533px;top:574px" width="16" height="17" viewBox="0 0 16 17"><defs><linearGradient id="ig574" x1="0" y1="0" x2="0" y2="1"><stop offset="0" stop-color="#7a7a7a"/><stop offset="1" stop-color="#3c3c3c"/></linearGradient></defs><path d="M9.500 12.500l3.200 3.200-.5-4.500z" fill="#3c3c3c"/><ellipse cx="7.700" cy="7.200" rx="6.600" ry="6.300" fill="url(#ig574)"/><circle cx="7.700" cy="3.900" r="1.250" fill="#f0f0f0"/><path d="M6.200 6h2.600v4.300h.9v1H5.900v-1h.9V7h-.6z" fill="#f0f0f0"/></svg>
<div style="left:581px;top:575px;width:13px;height:13px;background:#fff;border:1px solid #ababab;"></div>
<div class="t" style="right:1229px;top:575px;">0,00%</div>
<div style="left:131px;top:593px;width:1743px;height:25px;background:#f0f0f0;"></div>
<svg style="left:141px;top:602px" width="7" height="7" viewBox="0 0 7 7"><path d="M0 7h7V0z" fill="#555"/></svg>
<div class="t b" style="left:155px;top:599px;">Hoofdrubriek: 1.PASSIVA</div>
<div style="left:131px;top:639px;width:565px;height:1px;background:#d0d0d0;"></div>
<div style="left:216px;top:619px;width:1px;height:21px;background:#d0d0d0;"></div>
<div style="left:445px;top:619px;width:1px;height:21px;background:#d0d0d0;"></div>
<div style="left:528px;top:619px;width:1px;height:21px;background:#d0d0d0;"></div>
<div style="left:552px;top:619px;width:1px;height:21px;background:#d0d0d0;"></div>
<div style="left:622px;top:619px;width:2px;height:21px;background:#a0a0a0;"></div>
<div class="t" style="left:136px;top:622px;">440000</div>
<div class="t" style="left:220px;top:622px;">Leveranciers</div>
<svg style="left:533px;top:621px" width="16" height="17" viewBox="0 0 16 17"><defs><linearGradient id="ig621" x1="0" y1="0" x2="0" y2="1"><stop offset="0" stop-color="#7a7a7a"/><stop offset="1" stop-color="#3c3c3c"/></linearGradient></defs><path d="M9.500 12.500l3.200 3.200-.5-4.500z" fill="#3c3c3c"/><ellipse cx="7.700" cy="7.200" rx="6.600" ry="6.300" fill="url(#ig621)"/><circle cx="7.700" cy="3.900" r="1.250" fill="#f0f0f0"/><path d="M6.200 6h2.600v4.300h.9v1H5.900v-1h.9V7h-.6z" fill="#f0f0f0"/></svg>
<div style="left:581px;top:622px;width:13px;height:13px;background:#fff;border:1px solid #ababab;"></div>
<div class="t" style="right:1229px;top:622px;">0,00%</div>
<div style="left:131px;top:640px;width:1743px;height:25px;background:#f0f0f0;"></div>
<svg style="left:141px;top:649px" width="7" height="7" viewBox="0 0 7 7"><path d="M0 7h7V0z" fill="#555"/></svg>
<div class="t b" style="left:155px;top:646px;">Hoofdrubriek: 2.RESULTATENREKENING</div>
<div style="left:132px;top:666px;width:84px;height:21px;background:linear-gradient(90deg,#ffffff,#e8ffe8);"></div>
<div style="left:216px;top:666px;width:229px;height:21px;background:linear-gradient(90deg,#ecffec,#c6fcc4);"></div>
<div style="left:445px;top:666px;width:83px;height:21px;background:#b8fcb4;"></div>
<div style="left:528px;top:666px;width:24px;height:21px;background:linear-gradient(90deg,#b8fcb4 25%,#10e010 100%);"></div>
<div style="left:552px;top:666px;width:70px;height:21px;background:#a4fba0;"></div>
<div style="left:622px;top:666px;width:74px;height:21px;background:#a4fba0;"></div>
<div style="left:131px;top:686px;width:565px;height:1px;background:#d0d0d0;"></div>
<div style="left:216px;top:666px;width:1px;height:21px;background:#d0d0d0;"></div>
<div style="left:445px;top:666px;width:1px;height:21px;background:#d0d0d0;"></div>
<div style="left:528px;top:666px;width:1px;height:21px;background:#d0d0d0;"></div>
<div style="left:552px;top:666px;width:1px;height:21px;background:#d0d0d0;"></div>
<div style="left:622px;top:666px;width:2px;height:21px;background:#a0a0a0;"></div>
<div class="t" style="left:136px;top:669px;">611351</div>
<div class="t" style="left:220px;top:669px;">Ond.&amp; herstel.roll.mater.(75%)</div>
<svg style="left:533px;top:668px" width="16" height="17" viewBox="0 0 16 17"><defs><linearGradient id="ig668" x1="0" y1="0" x2="0" y2="1"><stop offset="0" stop-color="#7a7a7a"/><stop offset="1" stop-color="#3c3c3c"/></linearGradient></defs><path d="M9.500 12.500l3.200 3.200-.5-4.500z" fill="#3c3c3c"/><ellipse cx="7.700" cy="7.200" rx="6.600" ry="6.300" fill="url(#ig668)"/><circle cx="7.700" cy="3.900" r="1.250" fill="#f0f0f0"/><path d="M6.200 6h2.600v4.300h.9v1H5.900v-1h.9V7h-.6z" fill="#f0f0f0"/></svg>
<div style="left:581px;top:669px;width:13px;height:13px;background:#fff;border:1px solid #ababab;"></div>
<svg style="left:583px;top:671px" width="9" height="8" viewBox="0 0 9 8"><path d="M.7 4L3.200 6.800 8.300.8" fill="none" stroke="#555" stroke-width="1.300"/></svg>
<div class="t" style="right:1229px;top:669px;">0,00%</div>
<div style="left:132px;top:687px;width:84px;height:21px;background:linear-gradient(90deg,#ffffff,#e8ffe8);"></div>
<div style="left:216px;top:687px;width:229px;height:21px;background:linear-gradient(90deg,#ecffec,#c6fcc4);"></div>
<div style="left:445px;top:687px;width:83px;height:21px;background:#b8fcb4;"></div>
<div style="left:528px;top:687px;width:24px;height:21px;background:linear-gradient(90deg,#b8fcb4 25%,#10e010 100%);"></div>
<div style="left:552px;top:687px;width:70px;height:21px;background:#a4fba0;"></div>
<div style="left:622px;top:687px;width:74px;height:21px;background:#a4fba0;"></div>
<div style="left:131px;top:707px;width:565px;height:1px;background:#d0d0d0;"></div>
<div style="left:216px;top:687px;width:1px;height:21px;background:#d0d0d0;"></div>
<div style="left:445px;top:687px;width:1px;height:21px;background:#d0d0d0;"></div>
<div style="left:528px;top:687px;width:1px;height:21px;background:#d0d0d0;"></div>
<div style="left:552px;top:687px;width:1px;height:21px;background:#d0d0d0;"></div>
<div style="left:622px;top:687px;width:2px;height:21px;background:#a0a0a0;"></div>
<div class="t" style="left:136px;top:690px;">612150</div>
<div class="t" style="left:220px;top:690px;">Brandstof rollend materieel</div>
<svg style="left:533px;top:689px" width="16" height="17" viewBox="0 0 16 17"><defs><linearGradient id="ig689" x1="0" y1="0" x2="0" y2="1"><stop offset="0" stop-color="#7a7a7a"/><stop offset="1" stop-color="#3c3c3c"/></linearGradient></defs><path d="M9.500 12.500l3.200 3.200-.5-4.500z" fill="#3c3c3c"/><ellipse cx="7.700" cy="7.200" rx="6.600" ry="6.300" fill="url(#ig689)"/><circle cx="7.700" cy="3.900" r="1.250" fill="#f0f0f0"/><path d="M6.200 6h2.600v4.300h.9v1H5.900v-1h.9V7h-.6z" fill="#f0f0f0"/></svg>
<div style="left:581px;top:690px;width:13px;height:13px;background:#fff;border:1px solid #ababab;"></div>
<svg style="left:583px;top:692px" width="9" height="8" viewBox="0 0 9 8"><path d="M.7 4L3.200 6.800 8.300.8" fill="none" stroke="#555" stroke-width="1.300"/></svg>
<div class="t" style="right:1229px;top:690px;">0,00%</div>
<div style="left:132px;top:708px;width:84px;height:21px;background:linear-gradient(90deg,#ffffff,#fff2e0);"></div>
<div style="left:216px;top:708px;width:229px;height:21px;background:linear-gradient(90deg,#fff4e6,#ffe8c8);"></div>
<div style="left:445px;top:708px;width:83px;height:21px;background:#ffe4c0;"></div>
<div style="left:528px;top:708px;width:24px;height:21px;background:linear-gradient(90deg,#ffe4c0 25%,#ffa010 100%);"></div>
<div style="left:552px;top:708px;width:70px;height:21px;background:#ffdfa8;"></div>
<div style="left:622px;top:708px;width:74px;height:21px;background:#ffdfa8;"></div>
<div style="left:131px;top:728px;width:565px;height:1px;background:#d0d0d0;"></div>
<div style="left:216px;top:708px;width:1px;height:21px;background:#d0d0d0;"></div>
<div style="left:445px;top:708px;width:1px;height:21px;background:#d0d0d0;"></div>
<div style="left:528px;top:708px;width:1px;height:21px;background:#d0d0d0;"></div>
<div style="left:552px;top:708px;width:1px;height:21px;background:#d0d0d0;"></div>
<div style="left:622px;top:708px;width:2px;height:21px;background:#a0a0a0;"></div>
<div class="t" style="left:136px;top:711px;">613531</div>
<div class="t" style="left:220px;top:711px;">Verz.roll.materieel (75%)</div>
<svg style="left:533px;top:710px" width="16" height="17" viewBox="0 0 16 17"><defs><linearGradient id="ig710" x1="0" y1="0" x2="0" y2="1"><stop offset="0" stop-color="#7a7a7a"/><stop offset="1" stop-color="#3c3c3c"/></linearGradient></defs><path d="M9.500 12.500l3.200 3.200-.5-4.500z" fill="#3c3c3c"/><ellipse cx="7.700" cy="7.200" rx="6.600" ry="6.300" fill="url(#ig710)"/><circle cx="7.700" cy="3.900" r="1.250" fill="#f0f0f0"/><path d="M6.200 6h2.600v4.300h.9v1H5.900v-1h.9V7h-.6z" fill="#f0f0f0"/></svg>
<div style="left:581px;top:711px;width:13px;height:13px;background:#fff;border:1px solid #ababab;"></div>
<svg style="left:583px;top:713px" width="9" height="8" viewBox="0 0 9 8"><path d="M.7 4L3.200 6.800 8.300.8" fill="none" stroke="#555" stroke-width="1.300"/></svg>
<div class="t" style="right:1229px;top:711px;">0,00%</div>
<div style="left:132px;top:729px;width:1390px;height:21px;background:#e4f0fa;"></div>
<div style="left:98px;top:729px;width:33px;height:20px;background:#cacaca;"></div>
<div style="left:131px;top:749px;width:565px;height:1px;background:#d0d0d0;"></div>
<div style="left:216px;top:729px;width:1px;height:21px;background:#d0d0d0;"></div>
<div style="left:445px;top:729px;width:1px;height:21px;background:#d0d0d0;"></div>
<div style="left:528px;top:729px;width:1px;height:21px;background:#d0d0d0;"></div>
<div style="left:552px;top:729px;width:1px;height:21px;background:#d0d0d0;"></div>
<div style="left:622px;top:729px;width:2px;height:21px;background:#a0a0a0;"></div>
<div class="t" style="left:136px;top:732px;">623100</div>
<div class="t" style="left:220px;top:732px;">Maaltijdcheques</div>
<svg style="left:533px;top:731px" width="16" height="17" viewBox="0 0 16 17"><defs><linearGradient id="ig731" x1="0" y1="0" x2="0" y2="1"><stop offset="0" stop-color="#7a7a7a"/><stop offset="1" stop-color="#3c3c3c"/></linearGradient></defs><path d="M9.500 12.500l3.200 3.200-.5-4.500z" fill="#3c3c3c"/><ellipse cx="7.700" cy="7.200" rx="6.600" ry="6.300" fill="url(#ig731)"/><circle cx="7.700" cy="3.900" r="1.250" fill="#f0f0f0"/><path d="M6.200 6h2.600v4.300h.9v1H5.900v-1h.9V7h-.6z" fill="#f0f0f0"/></svg>
<div style="left:581px;top:732px;width:13px;height:13px;background:#fff;border:1px solid #ababab;"></div>
<svg style="left:583px;top:734px" width="9" height="8" viewBox="0 0 9 8"><path d="M.7 4L3.200 6.800 8.300.8" fill="none" stroke="#555" stroke-width="1.300"/></svg>
<div class="t" style="right:1229px;top:732px;">0,00%</div>
<div style="left:132px;top:750px;width:84px;height:21px;background:linear-gradient(90deg,#ffffff,#e8ffe8);"></div>
<div style="left:216px;top:750px;width:229px;height:21px;background:linear-gradient(90deg,#ecffec,#c6fcc4);"></div>
<div style="left:445px;top:750px;width:83px;height:21px;background:#b8fcb4;"></div>
<div style="left:528px;top:750px;width:24px;height:21px;background:linear-gradient(90deg,#b8fcb4 25%,#10e010 100%);"></div>
<div style="left:552px;top:750px;width:70px;height:21px;background:#a4fba0;"></div>
<div style="left:622px;top:750px;width:74px;height:21px;background:#a4fba0;"></div>
<div style="left:131px;top:770px;width:565px;height:1px;background:#d0d0d0;"></div>
<div style="left:216px;top:750px;width:1px;height:21px;background:#d0d0d0;"></div>
<div style="left:445px;top:750px;width:1px;height:21px;background:#d0d0d0;"></div>
<div style="left:528px;top:750px;width:1px;height:21px;background:#d0d0d0;"></div>
<div style="left:552px;top:750px;width:1px;height:21px;background:#d0d0d0;"></div>
<div style="left:622px;top:750px;width:2px;height:21px;background:#a0a0a0;"></div>
<div class="t" style="left:136px;top:753px;">740100</div>
<div class="t" style="left:220px;top:753px;">VAA voertuigen</div>
<svg style="left:533px;top:752px" width="16" height="17" viewBox="0 0 16 17"><defs><linearGradient id="ig752" x1="0" y1="0" x2="0" y2="1"><stop offset="0" stop-color="#7a7a7a"/><stop offset="1" stop-color="#3c3c3c"/></linearGradient></defs><path d="M9.500 12.500l3.200 3.200-.5-4.500z" fill="#3c3c3c"/><ellipse cx="7.700" cy="7.200" rx="6.600" ry="6.300" fill="url(#ig752)"/><circle cx="7.700" cy="3.900" r="1.250" fill="#f0f0f0"/><path d="M6.200 6h2.600v4.300h.9v1H5.900v-1h.9V7h-.6z" fill="#f0f0f0"/></svg>
<div style="left:581px;top:753px;width:13px;height:13px;background:#fff;border:1px solid #ababab;"></div>
<svg style="left:583px;top:755px" width="9" height="8" viewBox="0 0 9 8"><path d="M.7 4L3.200 6.800 8.300.8" fill="none" stroke="#555" stroke-width="1.300"/></svg>
<div class="t" style="right:1229px;top:753px;">0,00%</div>
<div style="left:131px;top:791px;width:1391px;height:1px;background:#d0d0d0;"></div>
<div style="left:216px;top:771px;width:1px;height:21px;background:#d0d0d0;"></div>
<div style="left:445px;top:771px;width:1px;height:21px;background:#d0d0d0;"></div>
<div style="left:528px;top:771px;width:1px;height:21px;background:#d0d0d0;"></div>
<div style="left:552px;top:771px;width:1px;height:21px;background:#d0d0d0;"></div>
<div style="left:622px;top:771px;width:1px;height:21px;background:#d0d0d0;"></div>
<div style="left:696px;top:771px;width:1px;height:21px;background:#d0d0d0;"></div>
<div style="left:794px;top:771px;width:1px;height:21px;background:#d0d0d0;"></div>
<div style="left:892px;top:771px;width:1px;height:21px;background:#d0d0d0;"></div>
<div style="left:984px;top:771px;width:1px;height:21px;background:#d0d0d0;"></div>
<div style="left:1070px;top:771px;width:1px;height:21px;background:#d0d0d0;"></div>
<div style="left:1152px;top:771px;width:1px;height:21px;background:#d0d0d0;"></div>
<div style="left:1256px;top:771px;width:1px;height:21px;background:#d0d0d0;"></div>
<div style="left:1371px;top:771px;width:1px;height:21px;background:#d0d0d0;"></div>
<div style="left:1522px;top:771px;width:1px;height:21px;background:#d0d0d0;"></div>
<div style="left:529px;top:771px;width:23px;height:20px;background:#f0f0f0;"></div>
<div style="left:795px;top:771px;width:97px;height:20px;background:#f0f0f0;"></div>
<div style="left:985px;top:771px;width:85px;height:20px;background:#f0f0f0;"></div>
<div style="left:1071px;top:771px;width:81px;height:20px;background:#f0f0f0;"></div>
<div style="left:1153px;top:771px;width:103px;height:20px;background:#f0f0f0;"></div>
<div style="left:1257px;top:771px;width:114px;height:20px;background:#f0f0f0;"></div>
<div style="left:622px;top:771px;width:2px;height:21px;background:#a0a0a0;"></div>
<div style="left:581px;top:774px;width:13px;height:13px;background:#fff;border:1px solid #ababab;"></div>
<div style="left:584px;top:777px;width:7px;height:7px;background:#555;"></div>
<div class="t" style="left:103px;top:775px;font-size:9px;color:#555;">❊</div>
<div style="left:131px;top:525px;width:1px;height:267px;background:#b4b4b4;"></div>
<div class="t" style="right:1228px;top:774px;">0,00</div>
<div class="t" style="right:940px;top:774px;">0,00</div>
<div class="t" style="right:854px;top:774px;">0,00</div>
<div class="t" style="right:772px;top:774px;">0,00</div>
<div class="t" style="right:668px;top:774px;">0,00</div>
<div class="t" style="right:553px;top:774px;">0,00</div>
<div style="left:696px;top:729px;width:81px;height:21px;background:#ffff00;"></div>
<div class="t" style="left:700px;top:732px;">1215</div>
<div style="left:777px;top:729px;width:17px;height:21px;background:#b2b2b2;"></div>
<svg style="left:782px;top:737px" width="7" height="4" viewBox="0 0 7 4"><path d="M0 0h7L3.500 4z" fill="#222"/></svg>
<div style="left:794px;top:729px;width:1px;height:21px;background:#d0d0d0;"></div>
<div style="left:892px;top:729px;width:1px;height:21px;background:#d0d0d0;"></div>
<div style="left:984px;top:729px;width:1px;height:21px;background:#d0d0d0;"></div>
<div style="left:1070px;top:729px;width:1px;height:21px;background:#d0d0d0;"></div>
<div style="left:1152px;top:729px;width:1px;height:21px;background:#d0d0d0;"></div>
<div style="left:1256px;top:729px;width:1px;height:21px;background:#d0d0d0;"></div>
<div style="left:1371px;top:729px;width:1px;height:21px;background:#d0d0d0;"></div>
<div style="left:1522px;top:729px;width:1px;height:21px;background:#d0d0d0;"></div>
<div class="t" style="left:798px;top:732px;">Maaltijdcheques</div>
<div class="t" style="right:940px;top:732px;">5.000,00</div>
<div class="t" style="right:854px;top:732px;">0,00</div>
<div class="t" style="right:772px;top:732px;">0,00</div>
<div class="t" style="right:668px;top:732px;">5.000,00</div>
<div class="t" style="right:553px;top:732px;">0,00</div>
<div class="t" style="left:1375px;top:732px;letter-spacing:-0.15px;">Bezoldigingen, sociale laste...</div>
<div style="left:131px;top:728px;width:1391px;height:22px;border:1px dotted #222;"></div>
<svg style="left:99px;top:734px" width="11" height="11" viewBox="0 0 11 11"><path d="M1 1l9 9M10 1l-9 9" stroke="#e01010" stroke-width="3"/></svg>
<svg style="left:117px;top:734px" width="8" height="11" viewBox="0 0 8 11"><path d="M5 0l2 1-4 8-2 1 0-2z" fill="none" stroke="#777" stroke-width=".9"/><path d="M5 10h3" stroke="#777"/></svg>
<div style="left:696px;top:750px;width:98px;height:21px;background:linear-gradient(90deg,#80f880,#a0faa0 50%,#88f888);"></div>
<div style="left:794px;top:750px;width:98px;height:21px;background:linear-gradient(90deg,#eef8ee,#08ee08 95%);"></div>
<div class="t" style="left:798px;top:753px;color:#2f4f4f;">Voertuig</div>
<div style="left:892px;top:750px;width:92px;height:21px;background:linear-gradient(90deg,#78f878,#6af66a 75%,#48ee48);"></div>
<div style="left:984px;top:750px;width:86px;height:21px;background:linear-gradient(90deg,#eef8ee,#08f208);"></div>
<div style="left:1070px;top:750px;width:82px;height:21px;background:linear-gradient(90deg,#eef8ee,#08f208);"></div>
<div style="left:1152px;top:750px;width:104px;height:21px;background:linear-gradient(90deg,#eef8ee,#08f208);"></div>
<div style="left:1256px;top:750px;width:115px;height:21px;background:linear-gradient(90deg,#eef8ee,#08f208);"></div>
<div style="left:1371px;top:750px;width:151px;height:21px;background:#00ff00;"></div>
<div class="t" style="left:1375px;top:753px;color:#2f4f4f;">Andere bedrijfsopbrengsten</div>
<div class="t" style="right:940px;top:753px;color:#2f4f4f;">-78.028,24</div>
<div class="t" style="right:854px;top:753px;color:#2f4f4f;">0,00</div>
<div class="t" style="right:772px;top:753px;color:#2f4f4f;">0,00</div>
<div class="t" style="right:668px;top:753px;color:#2f4f4f;">-78.028,24</div>
<div class="t" style="right:553px;top:753px;color:#2f4f4f;">0,00</div>
<div style="left:696px;top:770px;width:826px;height:1px;background:#d0d0d0;"></div>
<div style="left:794px;top:750px;width:1px;height:21px;background:#c8e8c8;"></div>
<div style="left:892px;top:750px;width:1px;height:21px;background:#c8e8c8;"></div>
<div style="left:984px;top:750px;width:1px;height:21px;background:#c8e8c8;"></div>
<div style="left:1070px;top:750px;width:1px;height:21px;background:#c8e8c8;"></div>
<div style="left:1152px;top:750px;width:1px;height:21px;background:#c8e8c8;"></div>
<div style="left:1256px;top:750px;width:1px;height:21px;background:#c8e8c8;"></div>
<div style="left:1371px;top:750px;width:1px;height:21px;background:#c8e8c8;"></div>
<div style="left:1522px;top:750px;width:1px;height:21px;background:#c8e8c8;"></div>
<div style="left:98px;top:946px;width:1776px;height:31px;background:#f0f0f0;border-top:1px solid #ababab;"></div>
<div style="left:895px;top:950px;width:89px;height:24px;background:#fff;border:1px solid #ababab;"></div>
<div class="t" style="right:942px;top:955px;font-size:10.500px;">Som = 0,00</div>
<div style="left:1154px;top:950px;width:102px;height:24px;background:#fff;border:1px solid #ababab;"></div>
<div class="t" style="right:670px;top:955px;font-size:10.500px;">Som = 0,00</div>
<div style="left:1258px;top:950px;width:113px;height:24px;background:#fff;border:1px solid #ababab;"></div>
<div class="t" style="right:555px;top:955px;font-size:10.500px;">Som = 0,00</div>
<div style="left:696px;top:104px;width:1001px;height:626px;background:#f0f0f0;border:1px solid #b0b0b0;box-shadow:0 0 4px rgba(0,0,0,.22);"></div>
<div style="left:702px;top:108px;width:16px;height:16px;background:#f0f0f0;border:1px solid #ababab;"></div>
<svg style="left:706px;top:112px" width="8" height="8" viewBox="0 0 8 8" stroke="#555" stroke-width="1.4"><path d="M0 0L8 8M8 0L0 8"/></svg>
<div style="left:1687px;top:106px;width:2px;height:2px;background:#555;"></div>
<div style="left:1690px;top:106px;width:2px;height:2px;background:#555;"></div>
<div style="left:1693px;top:106px;width:2px;height:2px;background:#555;"></div>
<div style="left:1690px;top:109px;width:2px;height:2px;background:#555;"></div>
<div style="left:1693px;top:109px;width:2px;height:2px;background:#555;"></div>
<div style="left:1693px;top:112px;width:2px;height:2px;background:#555;"></div>
<div style="left:697px;top:128px;width:999px;height:1px;background:#ababab;"></div>
<div style="left:697px;top:148px;width:999px;height:1px;background:#ababab;"></div>
<div style="left:715px;top:129px;width:1px;height:19px;background:#ababab;"></div>
<div style="left:826px;top:129px;width:1px;height:19px;background:#ababab;"></div>
<div style="left:1109px;top:129px;width:1px;height:19px;background:#ababab;"></div>
<div style="left:1422px;top:129px;width:1px;height:19px;background:#ababab;"></div>
<div style="left:1500px;top:129px;width:1px;height:19px;background:#ababab;"></div>
<div class="t" style="left:720px;top:131px;">Code</div>
<svg style="left:812px;top:136px" width="9" height="5" viewBox="0 0 9 5"><path d="M0 5h9L4.500 0z" fill="#555"/></svg>
<div class="t" style="left:830px;top:131px;">Omschr</div>
<div class="t" style="left:1113px;top:131px;">Omschr. Frans</div>
<div class="t" style="left:1427px;top:131px;">Aanslagjaar</div>
<div style="left:716px;top:149px;width:963px;height:580px;background:#fff;"></div>
<svg style="left:704px;top:155px" width="5" height="9" viewBox="0 0 5 9"><circle cx="2.500" cy="2.500" r="1.900" fill="none" stroke="#555" stroke-width="1"/><path d="M2.500 4.500v4.500" stroke="#555"/></svg>
<div style="left:697px;top:169px;width:804px;height:2px;background:#b4b4b4;"></div>
<div style="left:715px;top:149px;width:1px;height:20px;background:#d0d0d0;"></div>
<div style="left:826px;top:149px;width:1px;height:20px;background:#d0d0d0;"></div>
<div style="left:1109px;top:149px;width:1px;height:20px;background:#d0d0d0;"></div>
<div style="left:1422px;top:149px;width:1px;height:20px;background:#d0d0d0;"></div>
<div style="left:1500px;top:149px;width:1px;height:20px;background:#d0d0d0;"></div>
<div style="left:697px;top:171px;width:982px;height:558px;overflow:hidden;">
<div style="left:19px;top:20px;width:785px;height:1px;background:#d0d0d0;"></div>
<div class="t" style="left:23px;top:3px;">1056</div>
<div class="t" style="left:133px;top:3px;">Meerwaarden niet-belastbaar</div>
<div class="t" style="left:416px;top:3px;">Plus-value non-imposable</div>
<div class="t" style="left:730px;top:3px;">?</div>
<div style="left:19px;top:41px;width:785px;height:1px;background:#d0d0d0;"></div>
<div class="t" style="left:23px;top:24px;">1201a</div>
<div class="t" style="left:133px;top:24px;">Niet aftrekbare belastingen, Geraamde provisie</div>
<div class="t" style="left:416px;top:24px;">Impôts non déductibles - Dette fiscale estimée</div>
<div class="t" style="left:730px;top:24px;">?</div>
<div style="left:19px;top:62px;width:785px;height:1px;background:#d0d0d0;"></div>
<div class="t" style="left:23px;top:45px;">1201b</div>
<div class="t" style="left:133px;top:45px;letter-spacing:-0.083px;">Door de vennootschap gedragen RV op uitgekeerde div...</div>
<div class="t" style="left:416px;top:45px;letter-spacing:-0.127px;">Précompte mobilier supporté par la société sur dividendes dist...</div>
<div class="t" style="left:730px;top:45px;">?</div>
<div style="left:19px;top:83px;width:785px;height:1px;background:#d0d0d0;"></div>
<div class="t" style="left:23px;top:66px;">1201c</div>
<div class="t" style="left:133px;top:66px;letter-spacing:-0.019px;">Door de vennootschap gedragen RV op andere uitbeta...</div>
<div class="t" style="left:416px;top:66px;letter-spacing:-0.044px;">Précompte mobilier supporté par la société sur autres revenu...</div>
<div class="t" style="left:730px;top:66px;">?</div>
<div style="left:19px;top:104px;width:785px;height:1px;background:#d0d0d0;"></div>
<div class="t" style="left:23px;top:87px;">1201d</div>
<div class="t" style="left:133px;top:87px;">Door de vennootschap gedragen bijkomende heffing o...</div>
<div class="t" style="left:416px;top:87px;letter-spacing:-0.102px;">Cotisation supplémentaire sur des revenus mobiliers supporté...</div>
<div class="t" style="left:730px;top:87px;">?</div>
<div style="left:19px;top:125px;width:785px;height:1px;background:#d0d0d0;"></div>
<div class="t" style="left:23px;top:108px;">1201e</div>
<div class="t" style="left:133px;top:108px;">Niet aftrekbare belastingen, andere</div>
<div class="t" style="left:416px;top:108px;">Impôts non déductibles, autre</div>
<div class="t" style="left:730px;top:108px;">?</div>
<div style="left:19px;top:146px;width:785px;height:1px;background:#d0d0d0;"></div>
<div class="t" style="left:23px;top:129px;">1201f</div>
<div class="t" style="left:133px;top:129px;">Terugbetalingen en regulariseringen</div>
<div class="t" style="left:416px;top:129px;">Remboursements et régularisations</div>
<div class="t" style="left:730px;top:129px;">?</div>
<div style="left:19px;top:167px;width:785px;height:1px;background:#d0d0d0;"></div>
<div class="t" style="left:23px;top:150px;">1202</div>
<div class="t" style="left:133px;top:150px;">Gewestelijke belastingen, heffingen en retributies</div>
<div class="t" style="left:416px;top:150px;">Impôts, taxes et rétributions régionaux</div>
<div class="t" style="left:730px;top:150px;">?</div>
<div style="left:19px;top:188px;width:785px;height:1px;background:#d0d0d0;"></div>
<div class="t" style="left:23px;top:171px;">1203</div>
<div class="t" style="left:133px;top:171px;">Geldboeten, verbeurdverklaringen en straffen van alle ...</div>
<div class="t" style="left:416px;top:171px;">Amendes, pénalités et confiscations de toute nature</div>
<div class="t" style="left:730px;top:171px;">?</div>
<div style="left:19px;top:209px;width:785px;height:1px;background:#d0d0d0;"></div>
<div class="t" style="left:23px;top:192px;">1204</div>
<div class="t" style="left:133px;top:192px;">Niet-aftrekbare pensioenen, kapitalen, werkgeversbijdr...</div>
<div class="t" style="left:416px;top:192px;letter-spacing:-0.016px;">Pensions, capitaux, cotisations et primes patronales non déd...</div>
<div class="t" style="left:730px;top:192px;">?</div>
<div style="left:19px;top:230px;width:785px;height:1px;background:#d0d0d0;"></div>
<div class="t" style="left:23px;top:213px;">1205a</div>
<div class="t" style="left:133px;top:213px;">Niet aftrekbare autokosten %</div>
<div class="t" style="left:416px;top:213px;">Frais de voiture non déductibles %</div>
<div class="t" style="left:730px;top:213px;">?</div>
<div style="left:19px;top:251px;width:785px;height:1px;background:#d0d0d0;"></div>
<div class="t" style="left:23px;top:234px;">1205b</div>
<div class="t" style="left:133px;top:234px;">Niet aftrekbare minderwaarden auto&#x27;s %</div>
<div class="t" style="left:416px;top:234px;">Moins-values de voiture non déductibles %</div>
<div class="t" style="left:730px;top:234px;">?</div>
<div style="left:19px;top:272px;width:785px;height:1px;background:#d0d0d0;"></div>
<div class="t" style="left:23px;top:255px;">1205c</div>
<div class="t" style="left:133px;top:255px;">Niet aftrekbare autokosten brandstof %</div>
<div class="t" style="left:416px;top:255px;">Frais de voiture non déductibles carburants %</div>
<div class="t" style="left:730px;top:255px;">?</div>
<div style="left:19px;top:293px;width:785px;height:1px;background:#d0d0d0;"></div>
<div class="t" style="left:23px;top:276px;">1206</div>
<div class="t" style="left:133px;top:276px;">Autokosten ten belope van een gedeelte van het voor...</div>
<div class="t" style="left:416px;top:276px;letter-spacing:-0.044px;">Frais de voiture à concurrence d&#x27;une quotité de l&#x27;avantage de...</div>
<div class="t" style="left:730px;top:276px;">?</div>
<div style="left:19px;top:314px;width:785px;height:1px;background:#d0d0d0;"></div>
<div class="t" style="left:23px;top:297px;">1207</div>
<div class="t" style="left:133px;top:297px;">Niet-aftrekbare receptiekosten en kosten voor relatieg...</div>
<div class="t" style="left:416px;top:297px;">Frais de réception et de cadeaux d&#x27;affaires non déductibles</div>
<div class="t" style="left:730px;top:297px;">?</div>
<div style="left:19px;top:335px;width:785px;height:1px;background:#d0d0d0;"></div>
<div class="t" style="left:23px;top:318px;">1208</div>
<div class="t" style="left:133px;top:318px;">Niet-aftrekbare restaurantkosten</div>
<div class="t" style="left:416px;top:318px;">Frais de restaurant non déductibles</div>
<div class="t" style="left:730px;top:318px;">?</div>
<div style="left:19px;top:356px;width:785px;height:1px;background:#d0d0d0;"></div>
<div class="t" style="left:23px;top:339px;">1209</div>
<div class="t" style="left:133px;top:339px;">Kosten voor niet-specifieke beroepskledij</div>
<div class="t" style="left:416px;top:339px;">Frais de vêtements professionnels non spécifiques</div>
<div class="t" style="left:730px;top:339px;">?</div>
<div style="left:19px;top:377px;width:785px;height:1px;background:#d0d0d0;"></div>
<div class="t" style="left:23px;top:360px;">1210</div>
<div class="t" style="left:133px;top:360px;">Overdreven interesten</div>
<div class="t" style="left:416px;top:360px;">Intérêts exagérés</div>
<div class="t" style="left:730px;top:360px;">?</div>
<div style="left:19px;top:398px;width:785px;height:1px;background:#d0d0d0;"></div>
<div class="t" style="left:23px;top:381px;">1211</div>
<div class="t" style="left:133px;top:381px;">Interesten met betrekking tot een gedeelte van bepaal...</div>
<div class="t" style="left:416px;top:381px;">Intérêts relatifs à une partie de certains emprunts</div>
<div class="t" style="left:730px;top:381px;">?</div>
<div style="left:19px;top:419px;width:785px;height:1px;background:#d0d0d0;"></div>
<div class="t" style="left:23px;top:402px;">1212</div>
<div class="t" style="left:133px;top:402px;">Abnormale of goedgunstige voordelen</div>
<div class="t" style="left:416px;top:402px;">Avantages anormaux ou bénévoles</div>
<div class="t" style="left:730px;top:402px;">?</div>
<div style="left:19px;top:440px;width:785px;height:1px;background:#d0d0d0;"></div>
<div class="t" style="left:23px;top:423px;">1214</div>
<div class="t" style="left:133px;top:423px;">Sociale voordelen</div>
<div class="t" style="left:416px;top:423px;">Avantages sociaux</div>
<div class="t" style="left:730px;top:423px;">?</div>
<div style="left:19px;top:441px;width:785px;height:21px;background:#e4f0fa;"></div>
<div style="left:19px;top:461px;width:785px;height:1px;background:#d0d0d0;"></div>
<div class="t" style="left:23px;top:444px;">1215</div>
<div class="t" style="left:133px;top:444px;">Voordelen uit maaltijd-, sport-, cultuur- of ecocheques</div>
<div class="t" style="left:416px;top:444px;">Avantages de titres-repas, chèques sport/culture ou éco-chè...</div>
<div class="t" style="left:730px;top:444px;">?</div>
<div style="left:19px;top:482px;width:785px;height:1px;background:#d0d0d0;"></div>
<div class="t" style="left:23px;top:465px;">1216</div>
<div class="t" style="left:133px;top:465px;">Liberaliteiten</div>
<div class="t" style="left:416px;top:465px;">Libéralités</div>
<div class="t" style="left:730px;top:465px;">?</div>
<div style="left:19px;top:503px;width:785px;height:1px;background:#d0d0d0;"></div>
<div class="t" style="left:23px;top:486px;">1216/2</div>
<div class="t" style="left:133px;top:486px;">Liberaliteiten (Andere)</div>
<div class="t" style="left:416px;top:486px;">Libéralités (autres)</div>
<div class="t" style="left:730px;top:486px;">?</div>
<div style="left:19px;top:524px;width:785px;height:1px;background:#d0d0d0;"></div>
<div class="t" style="left:23px;top:507px;">1217</div>
<div class="t" style="left:133px;top:507px;">Waardeverminderingen en minderwaarden op aandelen</div>
<div class="t" style="left:416px;top:507px;">Réductions de valeur et moins-values sur actions ou parts</div>
<div class="t" style="left:730px;top:507px;">?</div>
<div style="left:19px;top:545px;width:785px;height:1px;background:#d0d0d0;"></div>
<div class="t" style="left:23px;top:528px;">1218</div>
<div class="t" style="left:133px;top:528px;">Terugnemingen van vroegere vrijstellingen</div>
<div class="t" style="left:416px;top:528px;">Reprises d&#x27;exonérations antérieures</div>
<div class="t" style="left:730px;top:528px;">?</div>
<div style="left:19px;top:566px;width:785px;height:1px;background:#d0d0d0;"></div>
<div class="t" style="left:23px;top:549px;">1220</div>
<div class="t" style="left:133px;top:549px;">Vergoedingen ontbrekende coupon</div>
<div class="t" style="left:416px;top:549px;">Indemnités pour coupon manquant</div>
<div class="t" style="left:730px;top:549px;">?</div>
<div style="left:18px;top:0;width:1px;height:558px;background:#d0d0d0;"></div>
<div style="left:129px;top:0;width:1px;height:558px;background:#d0d0d0;"></div>
<div style="left:412px;top:0;width:1px;height:558px;background:#d0d0d0;"></div>
<div style="left:725px;top:0;width:1px;height:558px;background:#d0d0d0;"></div>
<div style="left:803px;top:0;width:1px;height:558px;background:#d0d0d0;"></div>
<div style="left:19px;top:440px;width:785px;height:22px;border:1px dotted #222;"></div>
<svg style="left:8px;top:448px" width="4" height="7" viewBox="0 0 4 7"><path d="M0 0v7l4-3.500z" fill="#555"/></svg>
</div>
<div style="left:1679px;top:149px;width:17px;height:580px;background:#e8e8e8;"></div>
<div style="left:1679px;top:166px;width:17px;height:322px;background:#c8c8c8;"></div>
<div style="left:1679px;top:149px;width:17px;height:17px;background:#f0f0f0;"></div>
<svg style="left:1683px;top:154px" width="9" height="6" viewBox="0 0 9 6"><path d="M1 5.200l3.500-3.700 3.500 3.700" fill="none" stroke="#606060" stroke-width="1.800"/></svg>
<svg style="left:1683px;top:717px" width="9" height="6" viewBox="0 0 9 6"><path d="M1 .8l3.500 3.700 3.500-3.700" fill="none" stroke="#606060" stroke-width="1.800"/></svg>
<div style="left:0px;top:1017px;width:1920px;height:23px;background:#f0f0f0;"></div>
<div class="t" style="left:7px;top:1022px;letter-spacing:-0.25px;">100048 (VU Demo Rechtspersoon 2020)</div>
<div class="t" style="left:212px;top:1022px;">Administrator</div>
<div class="t" style="left:291px;top:1022px;">Versie: 1.14.0.0.15/04/2020</div>
<div class="t" style="left:445px;top:1022px;color:#f40000;font-weight:bold;letter-spacing:0.38px;">Adsolut TaskService is niet geïnstalleerd</div>
<div class="t" style="left:688px;top:1022px;">Rij 1/3</div>
<div style="left:205px;top:1020px;width:1px;height:18px;background:#d4d4d4;"></div>
<div style="left:284px;top:1020px;width:1px;height:18px;background:#d4d4d4;"></div>
<div style="left:437px;top:1020px;width:1px;height:18px;background:#d4d4d4;"></div>
<div style="left:681px;top:1020px;width:1px;height:18px;background:#d4d4d4;"></div>
<div style="left:1775px;top:1020px;width:1px;height:18px;background:#d4d4d4;"></div>
<div style="left:1834px;top:1020px;width:1px;height:18px;background:#d4d4d4;"></div>
<div style="left:1882px;top:1020px;width:1px;height:18px;background:#d4d4d4;"></div>
<div class="t" style="left:1497px;top:1022px;">Actief boekjaar</div>
<div style="left:1572px;top:1020px;width:70px;height:19px;background:#f0f0f0;border:1px solid #ababab;"></div>
<div class="t" style="left:1577px;top:1022px;">2019</div>
<div style="left:1625px;top:1022px;width:1px;height:15px;background:#c6c6c6;"></div>
<svg style="left:1630px;top:1027px" width="7" height="4" viewBox="0 0 7 4"><path d="M0 0h7L3.500 4z" fill="#a0a0a0"/></svg>
<div class="t" style="left:1654px;top:1022px;letter-spacing:-0.16px;">woensdag 15 april 2020</div>
<div class="t" style="left:1784px;top:1022px;">17:25:47</div>
<div class="t" style="left:1889px;top:1022px;">NUM</div>
<div style="left:0px;top:1040px;width:1920px;height:40px;background:#000;"></div>
<div style="left:392px;top:1040px;width:48px;height:40px;background:#333;"></div>
<div style="left:200px;top:1078px;width:40px;height:2px;background:#76b9ed;"></div>
<div style="left:298px;top:1078px;width:40px;height:2px;background:#76b9ed;"></div>
<div style="left:392px;top:1078px;width:48px;height:2px;background:#76b9ed;"></div>
<svg style="left:16px;top:1052px" width="16" height="16" viewBox="0 0 16 16" fill="#fff"><path d="M0 2.300l6.500-.9v6.100H0zM7.300 1.300L16 0v7.500H7.300zM0 8.300h6.500v6.100L0 13.500zM7.300 8.300H16V16l-8.700-1.200z"/></svg>
<svg style="left:63px;top:1051px" width="18" height="18" viewBox="0 0 18 18" fill="none" stroke="#fff" stroke-width="1.500"><circle cx="11" cy="7" r="5.500"/><path d="M7 11L1 17.500"/></svg>
<svg style="left:110px;top:1053px" width="21" height="14" viewBox="0 0 21 14" fill="none" stroke="#fff" stroke-width="1.300"><rect x="4.500" y=".7" width="12" height="12.600"/><path d="M2.500 2.500H.7v9h1.800M18.500 2.500h1.800v9h-1.800"/></svg>
<svg style="left:159px;top:1048px" width="24" height="24" viewBox="0 0 24 24"><circle cx="12" cy="13" r="8" fill="none" stroke="#1ebbee" stroke-width="4"/><rect x="8" y="11.500" width="13" height="3" fill="#1ebbee"/><rect x="14" y="14.500" width="8" height="4" fill="#000"/><path d="M2 19C-1 11 10 1 22 3" fill="none" stroke="#f5c518" stroke-width="1.800"/></svg>
<svg style="left:208px;top:1050px" width="22" height="20" viewBox="0 0 22 20"><path d="M0 2h8l2 2h12v15H0z" fill="#f3c74a"/><path d="M0 6h22v13H0z" fill="#fbe08a"/><rect x="6" y="12" width="10" height="7" fill="#3d9be3"/><rect x="8" y="15" width="6" height="4" fill="#fbe08a"/></svg>
<svg style="left:256px;top:1048px" width="24" height="24" viewBox="0 0 24 24"><path d="M2 4c0-3 11-3 11 0v12c0 3-11 3-11 0z" fill="#e8c838"/><ellipse cx="7.500" cy="4" rx="5.500" ry="2" fill="#f7e588"/><path d="M12 21l9-9M13 12l8 9" stroke="#999" stroke-width="2.200"/><path d="M16 3h5v5M3 22h4" stroke="#3c3" stroke-width="1.500" fill="none"/></svg>
<svg style="left:305px;top:1048px" width="24" height="24" viewBox="0 0 24 24"><ellipse cx="11" cy="8" rx="9" ry="6.500" fill="#e8e8e8"/><ellipse cx="13" cy="7" rx="4" ry="2.500" fill="#d33"/><path d="M9 10l8 11M15 10l-7 11" stroke="#8cc6ee" stroke-width="2"/><circle cx="8" cy="21" r="2" fill="none" stroke="#2a7fd4" stroke-width="1.300"/><circle cx="17" cy="21" r="2" fill="none" stroke="#2a7fd4" stroke-width="1.300"/></svg>
<svg style="left:355px;top:1049px" width="22" height="22" viewBox="-11 -11 22 22"><circle r="11" fill="#db4437"/><path d="M0 0L-9.500 5.500A11 11 0 0 0 1 11L5.500 3z" fill="#0f9d58"/><path d="M0 0L5.500 3 1 11A11 11 0 0 0 9.500-5.500H0z" fill="#ffcd40"/><circle r="5" fill="#fff"/><circle r="4" fill="#4285f4"/></svg>
<svg style="left:395.300px;top:1042.100px" width="36" height="36" viewBox="0 0 55.400 55.400"><path d="M16.400 28.500L16.600 16.500Q16.800 10.600 22.800 10.600Q29.500 11.500 34.700 21.800Q28.500 16.800 21 24.500Q18.500 27.500 17 30Z" fill="#0279c3"/><path d="M31.100 14Q37 16.500 44.500 21.500Q48.500 25.900 44.500 30Q38 34.500 31.100 34.500Q37.500 31 36.800 24Q36 18 31.100 14Z" fill="#86bc25"/><path d="M20.700 24.900Q20 31 25 33.500Q30 36 37.900 35.300L25.500 42.500Q17.100 45 17.100 38L17.100 30Q18.500 27.500 20.700 24.900Z" fill="#009a82"/><circle cx="28.500" cy="27" r="5" fill="#3a3a3a"/></svg>
<svg style="left:1701px;top:1055px" width="12" height="7" viewBox="0 0 12 7"><path d="M.7 6.500L6 1l5.300 5.500" fill="none" stroke="#fff" stroke-width="1.300"/></svg>
<svg style="left:1723px;top:1052px" width="17" height="15" viewBox="0 0 17 15" fill="none" stroke="#fff" stroke-width="1.100"><rect x="5.500" y="2.500" width="10" height="7.500"/><path d="M8 13.500h6M11 10v3.500M.5 1.500h4v9h-4z"/></svg>
<svg style="left:1746px;top:1052px" width="18" height="15" viewBox="0 0 18 15"><path d="M1 5h3l4-4v12l-4-4H1z" fill="none" stroke="#fff" stroke-width="1.100"/><circle cx="13.500" cy="10.500" r="4" fill="#e81123"/><path d="M11.800 8.800l3.400 3.400M15.200 8.800l-3.400 3.400" stroke="#fff" stroke-width="1"/></svg>
<div class="t" style="left:1773px;top:1053px;color:#fff;font-size:12px;">NLD</div>
<div class="t c" style="left:1684px;top:1044px;color:#fff;font-size:12px;">5:25 PM</div>
<div class="t c" style="left:1684px;top:1062px;color:#fff;font-size:12px;">4/15/2020</div>
<svg style="left:1879px;top:1052px" width="16" height="16" viewBox="0 0 16 16"><path d="M.7 .7h14.600v11H9l-3.500 3.500V11.700H.7z" fill="none" stroke="#fff" stroke-width="1.200"/></svg>
<div style="left:1915px;top:1040px;width:1px;height:40px;background:#555;"></div>
</body></html>
